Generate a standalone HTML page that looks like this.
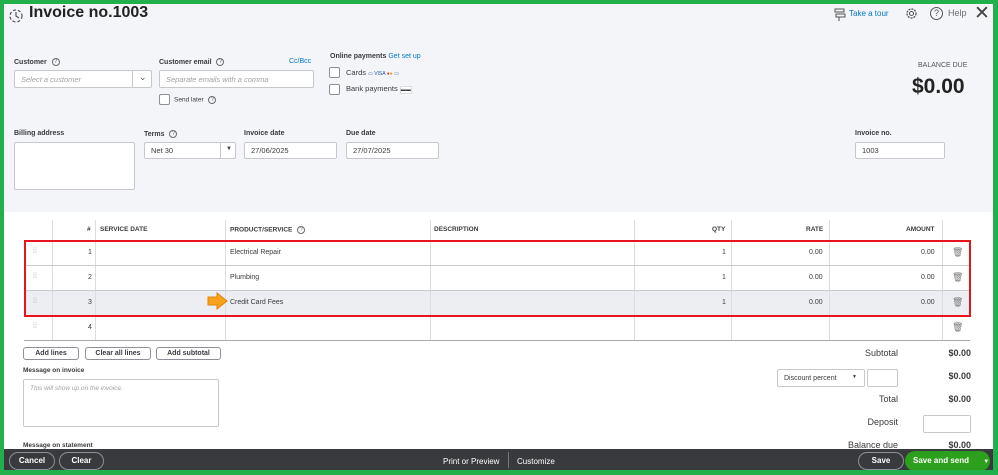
<!DOCTYPE html>
<html><head><style>
*{box-sizing:border-box;margin:0;padding:0}
body{width:998px;height:475px;overflow:hidden;background:#21b04b;font-family:"Liberation Sans",sans-serif;color:#393a3d;position:relative}
.abs{position:absolute}
#main{position:absolute;left:4px;top:4px;width:989px;height:466px;background:#fff;overflow:hidden}
#hdr{position:absolute;left:0;top:0;width:989px;height:208px;background:#f4f5f8}
.lbl{position:absolute;font-size:7px;font-weight:bold;color:#393a3d}
.inp{position:absolute;background:#fff;border:1px solid #c6c8cc;border-radius:2px;font-size:7.5px;padding-left:6px;display:flex;align-items:center}
.ph{color:#a0a2a6;font-style:italic}
.q{display:inline-block;width:8px;height:8px;border:1px solid #6b6c72;border-radius:50%;font-size:6px;text-align:center;line-height:7px;color:#6b6c72;font-weight:normal;vertical-align:middle;margin-left:3px}
.cb{position:absolute;width:11px;height:11px;border:1px solid #8d9096;background:#fff;border-radius:2px}
.th{position:absolute;top:222px;font-size:6.5px;font-weight:bold}
.vl{position:absolute;top:216px;width:1px;height:121px;background:#dcdde0}
.hl{position:absolute;left:20px;width:946px;height:1px;background:#c9cacd}
.cell{position:absolute;font-size:7px;color:#393a3d}
.btn{position:absolute;border:1px solid #8d9096;border-radius:3px;background:#fff;font-size:7px;font-weight:bold;text-align:center;line-height:11px;height:13px}
.tot{position:absolute;font-size:9px;text-align:right}
</style></head><body>
<div id="main">
<div id="hdr"></div>
<svg class="abs" style="left:3px;top:3px" width="18" height="18" viewBox="0 0 18 18"><circle cx="9" cy="9" r="6" fill="none" stroke="#555" stroke-width="1.2" stroke-dasharray="3 2"/><path d="M9 5v4l3 2" stroke="#555" stroke-width="1.2" fill="none"/></svg>
<div class="abs" style="left:25px;top:0px;font-size:16px;font-weight:bold;color:#222">Invoice no.1003</div>
<svg class="abs" style="left:830px;top:4px" width="12" height="13" viewBox="0 0 12 13"><rect x="1" y="1" width="9" height="3" fill="none" stroke="#555"/><rect x="2" y="6" width="9" height="3" fill="none" stroke="#555"/><path d="M5 9v4" stroke="#555"/></svg>
<div class="abs" style="left:845px;top:5px;font-size:8px;color:#0077c5">Take a tour</div>
<svg class="abs" style="left:901px;top:3px" width="13" height="13" viewBox="0 0 13 13"><circle cx="6.5" cy="6.5" r="4.5" fill="none" stroke="#555" stroke-width="1.3" stroke-dasharray="2 1"/><circle cx="6.5" cy="6.5" r="2" fill="none" stroke="#555"/></svg>
<div class="abs" style="left:926px;top:3px;width:13px;height:13px;border:1.3px solid #555;border-radius:50%;font-size:9px;text-align:center;line-height:11px;color:#555">?</div>
<div class="abs" style="left:944px;top:4px;font-size:9px;color:#6b6c72">Help</div>
<div class="abs" style="left:970px;top:-2px;font-size:19px;color:#444">✕</div>

<div class="lbl" style="left:10px;top:54px">Customer <span class="q">?</span></div>
<div class="inp" style="left:10px;top:66px;width:138px;height:18px"><span class="ph">Select a customer</span><div class="abs" style="left:117px;top:0;width:1px;height:16px;background:#c6c8cc"></div><div class="abs" style="left:124px;top:1px;font-size:9px;color:#555">⌄</div></div>
<div class="lbl" style="left:155px;top:54px">Customer email <span class="q">?</span></div>
<div class="abs" style="left:285px;top:54px;font-size:7px;color:#0077c5">Cc/Bcc</div>
<div class="inp" style="left:155px;top:66px;width:155px;height:18px"><span class="ph">Separate emails with a comma</span></div>
<div class="cb" style="left:155px;top:90px"></div>
<div class="abs" style="left:170px;top:92px;font-size:6.5px">Send later <span class="q">?</span></div>
<div class="lbl" style="left:326px;top:49px">Online payments <span style="color:#0077c5;font-weight:normal">Get set up</span></div>
<div class="cb" style="left:325px;top:63px"></div>
<div class="abs" style="left:342px;top:64px;font-size:7.5px">Cards <span style="font-size:5px;color:#1a4fa0">▭ VISA <span style="color:#e33">●</span><span style="color:#f90">●</span> ▭</span></div>
<div class="cb" style="left:325px;top:80px"></div>
<div class="abs" style="left:342px;top:80px;font-size:7.5px">Bank payments <span style="font-size:5px;border:1px solid #ddd;background:#fff">▬▬</span></div>
<div class="abs" style="left:914px;top:58px;font-size:7px;color:#555">BALANCE DUE</div>
<div class="abs" style="left:908px;top:71px;font-size:21px;font-weight:bold;color:#222">$0.00</div>

<div class="lbl" style="left:10px;top:126px">Billing address</div>
<div class="inp" style="left:10px;top:138px;width:121px;height:48px"></div>
<div class="lbl" style="left:140px;top:126px">Terms <span class="q">?</span></div>
<div class="inp" style="left:140px;top:138px;width:92px;height:17px">Net 30<div class="abs" style="left:75px;top:0;width:1px;height:15px;background:#c6c8cc"></div><div class="abs" style="left:81px;top:3px;font-size:6px">▼</div></div>
<div class="lbl" style="left:240px;top:126px">Invoice date</div>
<div class="inp" style="left:240px;top:138px;width:93px;height:17px">27/06/2025</div>
<div class="lbl" style="left:342px;top:126px">Due date</div>
<div class="inp" style="left:342px;top:138px;width:93px;height:17px">27/07/2025</div>
<div class="lbl" style="left:851px;top:126px">Invoice no.</div>
<div class="inp" style="left:851px;top:138px;width:90px;height:17px">1003</div>

<div class="th" style="left:83px">#</div>
<div class="th" style="left:96px">SERVICE DATE</div>
<div class="th" style="left:226px">PRODUCT/SERVICE <span class="q">?</span></div>
<div class="th" style="left:430px">DESCRIPTION</div>
<div class="th" style="left:708px">QTY</div>
<div class="th" style="left:802px">RATE</div>
<div class="th" style="left:902px">AMOUNT</div>
<div class="abs" style="left:20px;top:286px;width:946px;height:25px;background:#eceef1"></div>
<div class="vl" style="left:48px"></div><div class="vl" style="left:91px"></div><div class="vl" style="left:221px"></div><div class="vl" style="left:426px"></div><div class="vl" style="left:630px"></div><div class="vl" style="left:727px"></div><div class="vl" style="left:825px"></div><div class="vl" style="left:938px"></div>
<div class="hl" style="top:236px"></div><div class="hl" style="top:261px"></div><div class="hl" style="top:286px"></div><div class="hl" style="top:311px"></div><div class="hl" style="top:336px;background:#a8aaae"></div>
<div class="abs" style="left:20px;top:236px;width:947px;height:77px;border:2px solid #e8141b"></div>
<div class="cell" style="left:29px;top:244px;color:#aaa">⁞⁞</div><div class="cell" style="left:29px;top:269px;color:#aaa">⁞⁞</div><div class="cell" style="left:29px;top:294px;color:#aaa">⁞⁞</div><div class="cell" style="left:29px;top:319px;color:#aaa">⁞⁞</div>
<div class="cell" style="left:84px;top:245px">1</div><div class="cell" style="left:84px;top:270px">2</div><div class="cell" style="left:84px;top:295px">3</div><div class="cell" style="left:84px;top:320px">4</div>
<div class="cell" style="left:226px;top:245px">Electrical Repair</div><div class="cell" style="left:226px;top:270px">Plumbing</div><div class="cell" style="left:226px;top:295px">Credit Card Fees</div>
<svg class="abs" style="left:203px;top:288px" width="21" height="18" viewBox="0 0 21 18"><path d="M1 5h9V1l10 8-10 8v-4H1z" fill="#f6a21a" stroke="#e8830c"/></svg>
<div class="cell" style="left:718px;top:245px">1</div><div class="cell" style="left:718px;top:270px">1</div><div class="cell" style="left:718px;top:295px">1</div>
<div class="cell" style="left:805px;top:245px">0.00</div><div class="cell" style="left:805px;top:270px">0.00</div><div class="cell" style="left:805px;top:295px">0.00</div>
<div class="cell" style="left:917px;top:245px">0.00</div><div class="cell" style="left:917px;top:270px">0.00</div><div class="cell" style="left:917px;top:295px">0.00</div>
<div class="cell" style="left:948px;top:243px;color:#777;font-size:9px">🗑</div><div class="cell" style="left:948px;top:268px;color:#777;font-size:9px">🗑</div><div class="cell" style="left:948px;top:293px;color:#777;font-size:9px">🗑</div><div class="cell" style="left:948px;top:318px;color:#777;font-size:9px">🗑</div>

<div class="btn" style="left:19px;top:343px;width:56px">Add lines</div>
<div class="btn" style="left:81px;top:343px;width:66px">Clear all lines</div>
<div class="btn" style="left:152px;top:343px;width:65px">Add subtotal</div>
<div class="lbl" style="left:19px;top:363px;font-size:6.5px">Message on invoice</div>
<div class="inp" style="left:19px;top:375px;width:196px;height:48px;align-items:flex-start;padding-top:5px"><span class="ph" style="font-size:6.5px">This will show up on the invoice.</span></div>
<div class="lbl" style="left:19px;top:438px;font-size:6.5px">Message on statement</div>

<div class="tot" style="left:820px;top:344px;width:74px">Subtotal</div>
<div class="tot" style="left:910px;top:344px;width:57px;font-weight:bold">$0.00</div>
<div class="inp" style="left:773px;top:365px;width:88px;height:18px;font-size:7px">Discount percent<span class="abs" style="left:74px;top:4px;font-size:5px">▼</span></div>
<div class="inp" style="left:863px;top:365px;width:31px;height:18px"></div>
<div class="tot" style="left:910px;top:367px;width:57px;font-weight:bold">$0.00</div>
<div class="tot" style="left:820px;top:390px;width:74px">Total</div>
<div class="tot" style="left:910px;top:390px;width:57px;font-weight:bold">$0.00</div>
<div class="tot" style="left:820px;top:413px;width:74px">Deposit</div>
<div class="inp" style="left:919px;top:411px;width:48px;height:18px"></div>
<div class="tot" style="left:820px;top:436px;width:74px">Balance due</div>
<div class="tot" style="left:910px;top:436px;width:57px;font-weight:bold">$0.00</div>

<div class="abs" style="left:0;top:445px;width:989px;height:21px;background:#393a3d"></div>
<div class="abs" style="left:5px;top:448px;width:46px;height:18px;border:1px solid #8d9096;border-radius:10px;color:#fff;font-size:8px;font-weight:bold;text-align:center;line-height:16px">Cancel</div>
<div class="abs" style="left:55px;top:448px;width:45px;height:18px;border:1px solid #8d9096;border-radius:10px;color:#fff;font-size:8px;font-weight:bold;text-align:center;line-height:16px">Clear</div>
<div class="abs" style="left:439px;top:453px;color:#fff;font-size:8px">Print or Preview</div>
<div class="abs" style="left:504px;top:448px;width:1px;height:16px;background:#777"></div>
<div class="abs" style="left:513px;top:453px;color:#fff;font-size:8px">Customize</div>
<div class="abs" style="left:854px;top:448px;width:46px;height:18px;border:1px solid #8d9096;border-radius:10px;color:#fff;font-size:8px;font-weight:bold;text-align:center;line-height:16px">Save</div>
<div class="abs" style="left:901px;top:447px;width:85px;height:20px;background:#2ca01c;border-radius:10px;color:#fff;font-size:8px;font-weight:bold;line-height:20px;padding-left:8px">Save and send <span style="margin-left:12px;font-size:6px">▼</span></div>
</div>
</body></html>
